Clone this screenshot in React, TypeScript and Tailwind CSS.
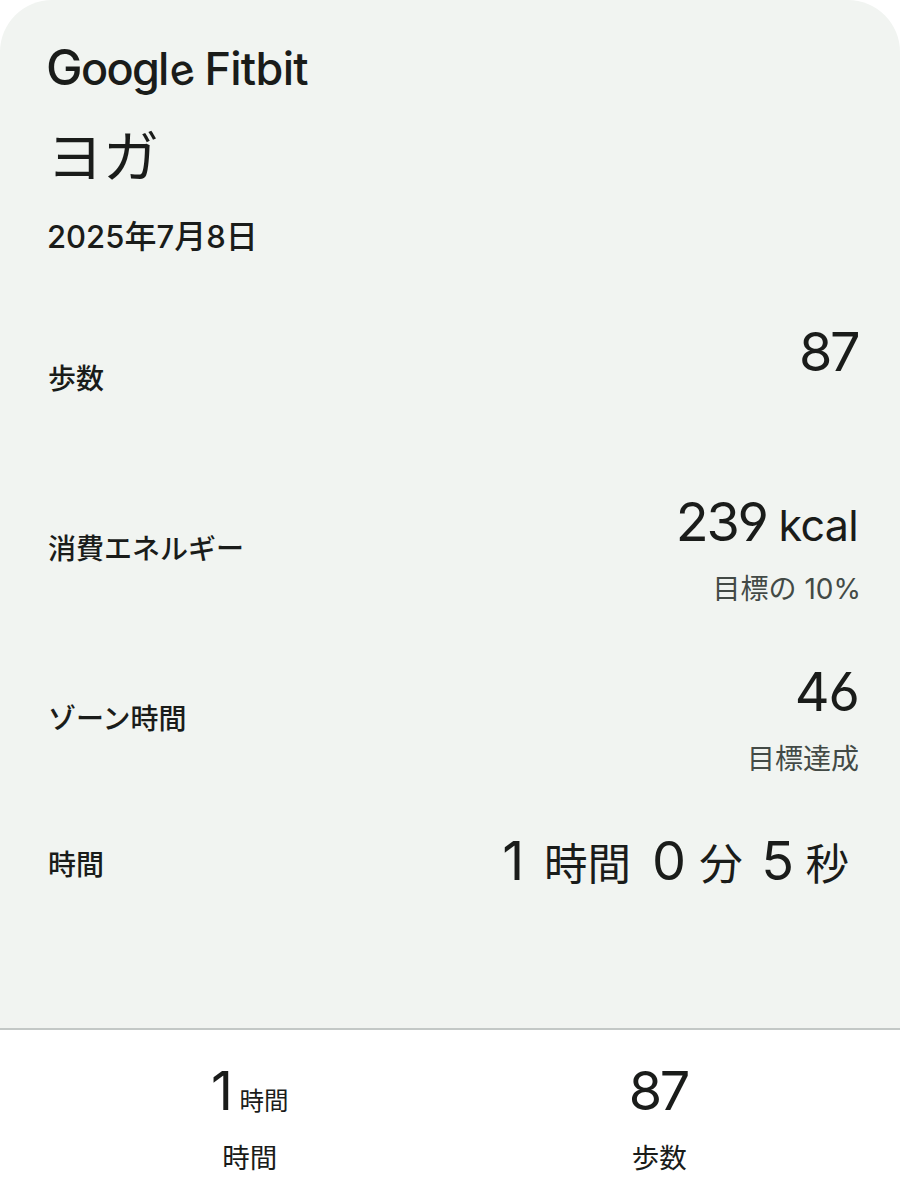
import type { ReactNode } from 'react'

type StatRowProps = {
  label: string
  goal?: ReactNode
  children: ReactNode
}

function Wordmark() {
  return (
    <h1 className="h-[60px] whitespace-nowrap text-[45px] leading-[60px] font-medium">
      <span className="tracking-[-1.7px]">
        <span className="-ml-0.5 text-[49px]">G</span>oogl
      </span>
      <span className="ml-px inline-block -rotate-[14deg] text-[42px] leading-none">e</span>
      <span className="ml-[11px] tracking-[-0.7px]">Fitbit</span>
    </h1>
  )
}

function StatRow({ label, goal, children }: StatRowProps) {
  return (
    <div className="flex h-[170px] items-center justify-between pr-[41px] pl-12">
      <span className="pt-0.5 text-[28px] leading-10 font-medium">{label}</span>
      <div className="flex h-full flex-col items-end pt-[23px]">
        <div className="h-[71px] text-[54px] leading-[71px] whitespace-nowrap">{children}</div>
        {goal && <div className="text-[28px] leading-[64px] whitespace-nowrap text-[#434a46]">{goal}</div>}
      </div>
    </div>
  )
}

function DurationRow() {
  return (
    <div className="flex h-[122px] items-center justify-between pr-[51px] pl-12">
      <span className="pt-px text-[28px] leading-10 font-medium">時間</span>
      <div className="flex items-baseline pb-[3px] text-[54px] leading-[70px]">
        <span>1</span>
        <span className="ml-5 text-[43.5px]">時間</span>
        <span className="ml-[21px]">0</span>
        <span className="ml-[13px] text-[43.5px]">分</span>
        <span className="ml-[18.5px]">5</span>
        <span className="ml-[11.5px] text-[43.5px]">秒</span>
      </div>
    </div>
  )
}

function SummaryItem({ value, unit, label }: { value: string; unit?: string; label: string }) {
  return (
    <div className="flex flex-1 flex-col items-center pt-[26px]">
      <div className="flex h-[70px] items-baseline text-[54px] leading-[70px]">
        <span className="-ml-0.5 tracking-[-2.5px]">{value}</span>
        {unit && <span className="-mr-0.5 ml-[9px] text-[24.5px]">{unit}</span>}
      </div>
      <div className="h-[64px] text-[27.5px] leading-[64px]">{label}</div>
    </div>
  )
}

export default function App() {
  return (
    <div className="flex h-[1200px] w-[900px] flex-col overflow-hidden bg-white font-['Inter','Noto_Sans_CJK_JP',sans-serif] text-[#1a1c1a] [font-feature-settings:'cv03','cv04']">
      <main className="h-[1028px] rounded-t-[52px] bg-[#f1f4f1]">
        <header className="flex h-[293px] flex-col pt-[38px] pl-12">
          <Wordmark />
          <h2 className="-ml-px mt-6 h-[70px] text-[56px] leading-[70px]">ヨガ</h2>
          <p className="-ml-px mt-[25px] h-10 text-[32px] leading-10 font-medium">
            <span className="text-[31px]">2025</span>年
            <span className="text-[31px]">7</span>月
            <span className="text-[31px]">8</span>日
          </p>
        </header>
        <StatRow label="歩数">
          <span className="mr-px tracking-[-2.5px]">87</span>
        </StatRow>
        <StatRow label="消費エネルギー" goal={<span className="-mr-0.5">目標の 10%</span>}>
          <span className="tracking-[-2.3px]">239</span>
          <span className="mr-px ml-3 text-[43px] tracking-[-0.7px]">kcal</span>
        </StatRow>
        <StatRow label="ゾーン時間" goal="目標達成">
          <span className="tracking-[-1px]">46</span>
        </StatRow>
        <DurationRow />
      </main>
      <footer className="flex h-[172px] border-t-2 border-[#c3c8c6] bg-white pr-9 pl-[45px]">
        <SummaryItem value="1" unit="時間" label="時間" />
        <SummaryItem value="87" label="歩数" />
      </footer>
    </div>
  )
}
